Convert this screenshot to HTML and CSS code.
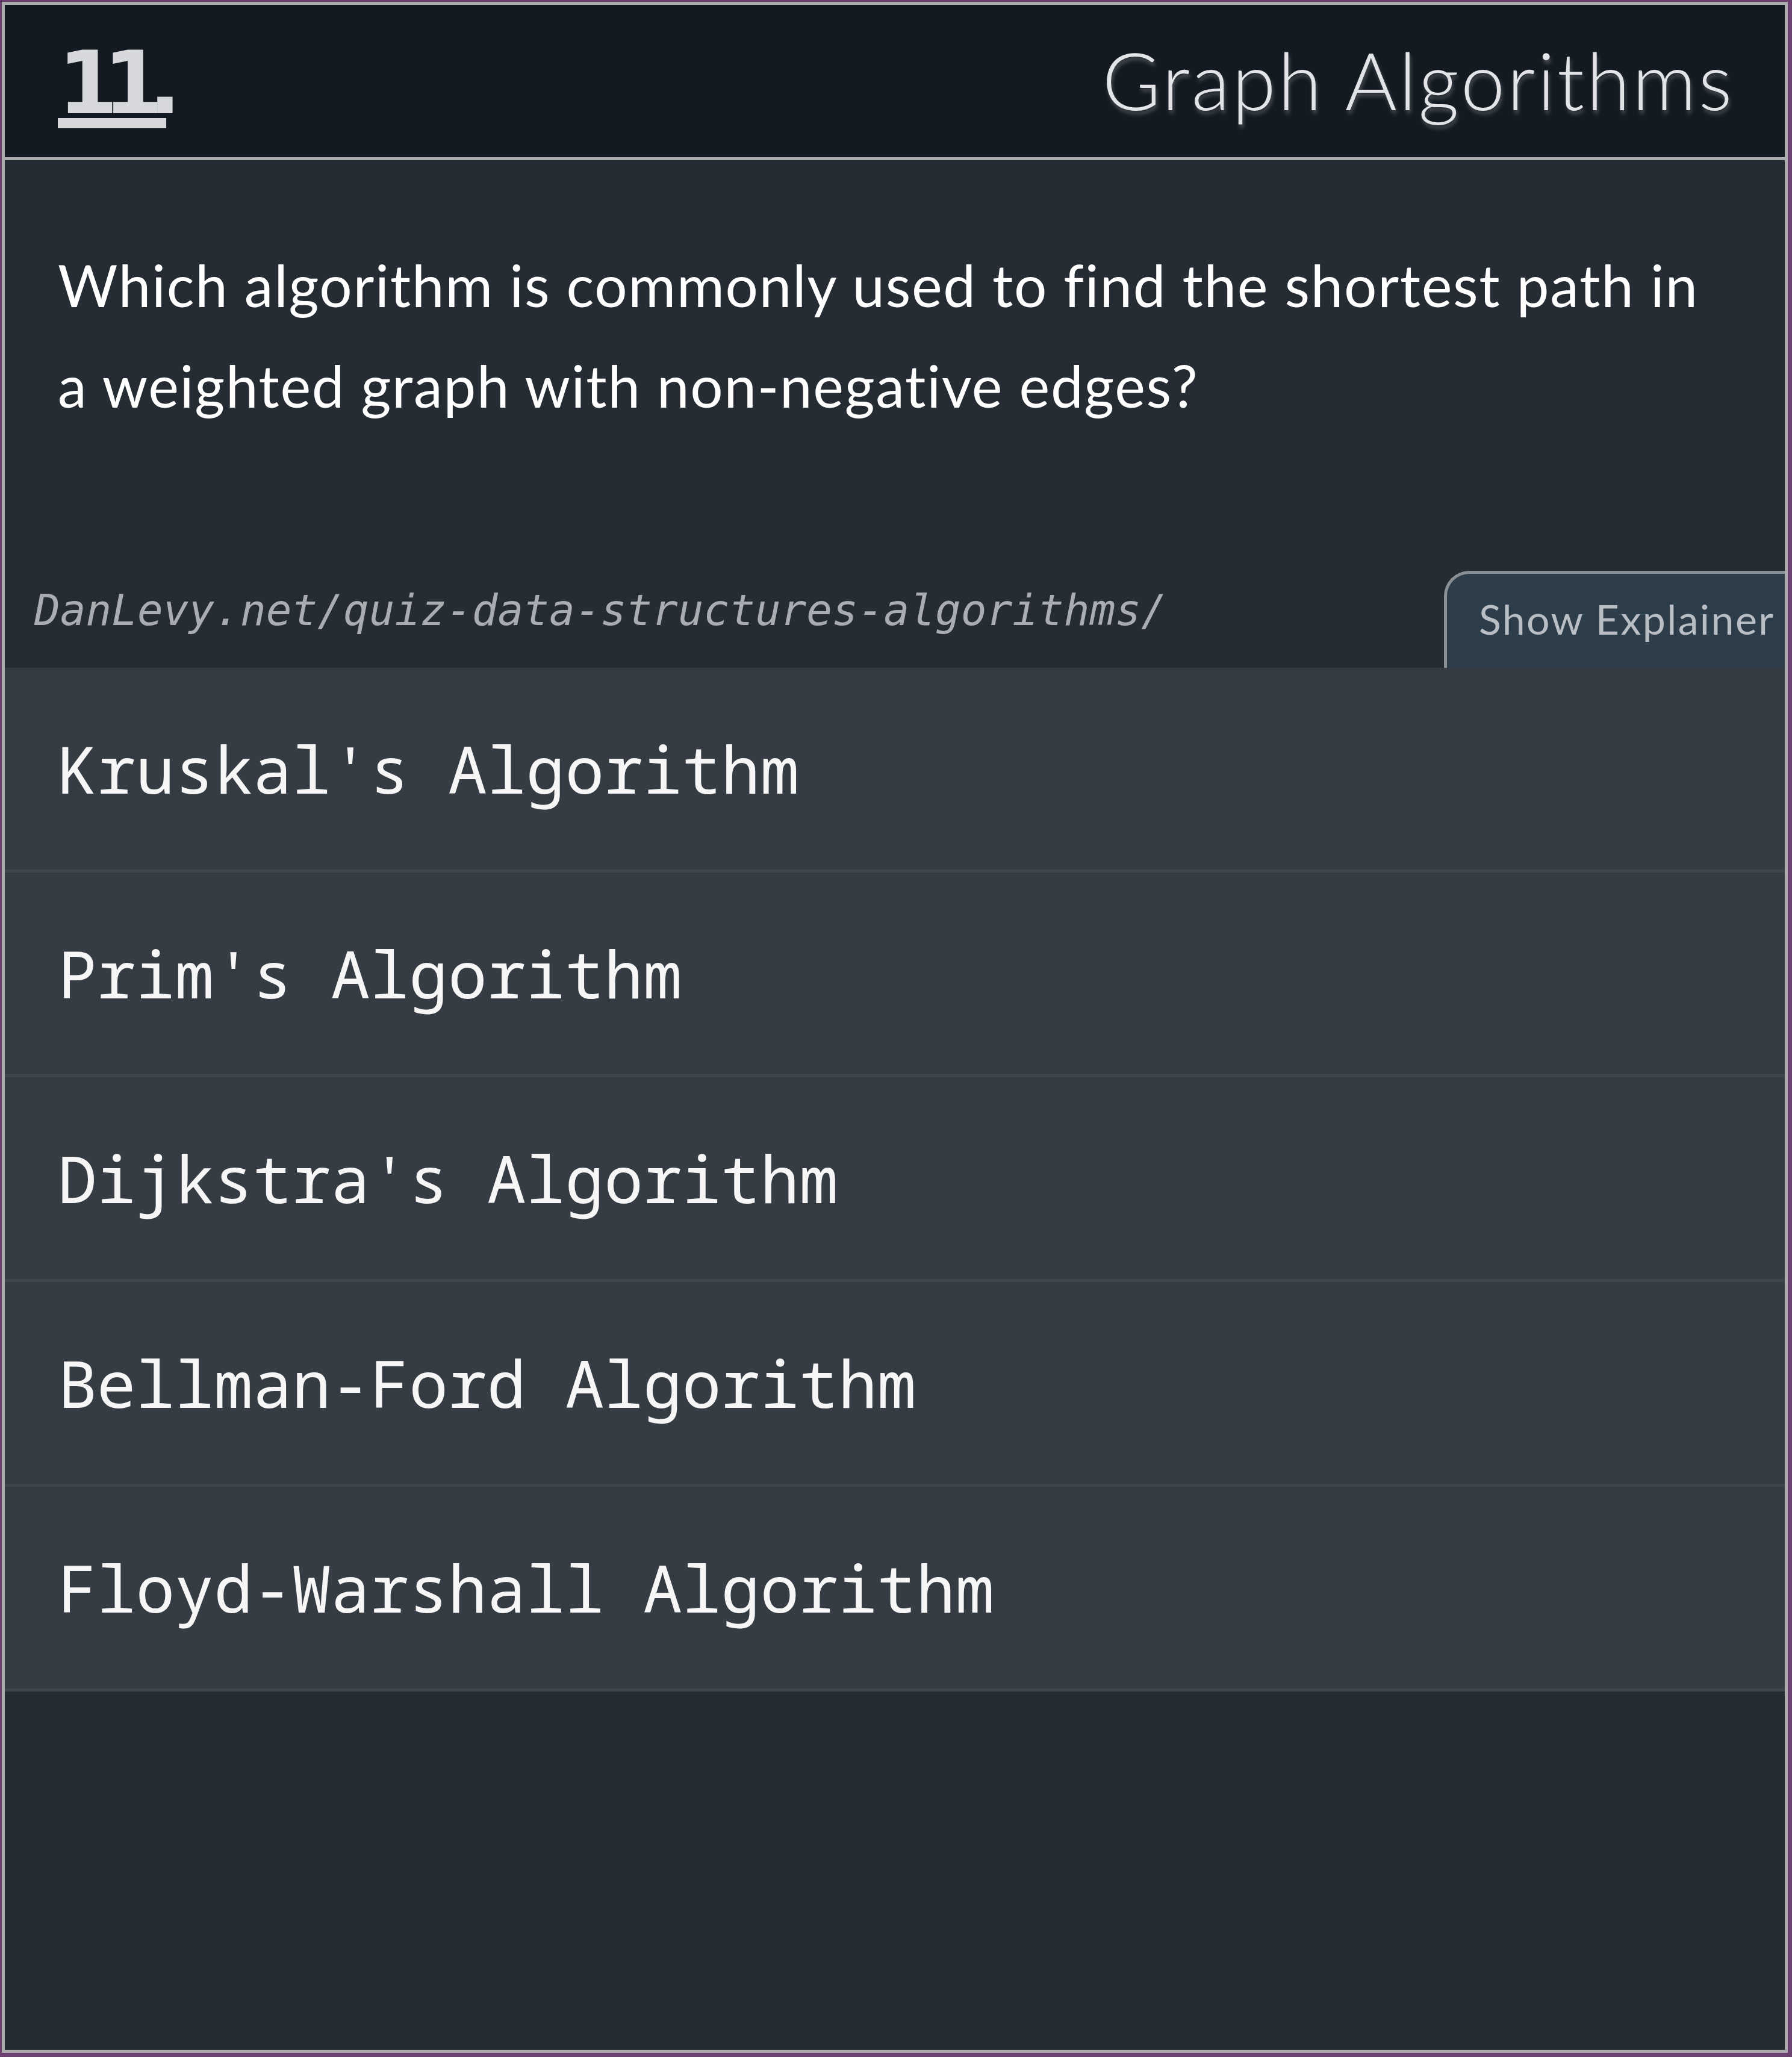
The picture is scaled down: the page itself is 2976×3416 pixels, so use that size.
FILE: index.html
```html
<!DOCTYPE html>
<html lang="en">
<head>
<meta charset="utf-8">
<title>Quiz 11 - Graph Algorithms</title>
<link rel="stylesheet" href="styles.css">
</head>
<body>
<div class="card">
  <header class="card-header">
    <span class="q-num">11.</span>
    <h1 class="q-title">Graph Algorithms</h1>
  </header>
  <p class="question">Which algorithm is commonly used to find the shortest path in a weighted graph with non-negative edges?</p>
  <div class="meta-row">
    <span class="source-url">DanLevy.net/quiz-data-structures-algorithms/</span>
    <button class="explainer-btn">Show Explainer</button>
  </div>
  <ul class="options">
    <li class="option">Kruskal's Algorithm</li>
    <li class="option">Prim's Algorithm</li>
    <li class="option">Dijkstra's Algorithm</li>
    <li class="option">Bellman-Ford Algorithm</li>
    <li class="option">Floyd-Warshall Algorithm</li>
  </ul>
</div>
</body>
</html>
```

FILE: styles.css
```css
html, body {
  margin: 0;
  padding: 0;
}
body {
  background: #6b3f6e;
  padding: 3px 7px 7px 3px;
}
.card {
  box-sizing: border-box;
  height: 3406px;
  border: 5px solid #a9abad;
  background: #262c33;
  display: flex;
  flex-direction: column;
  overflow: hidden;
}
.card-header {
  box-sizing: border-box;
  height: 258px;
  flex: none;
  background: #131a21;
  border-bottom: 5px solid #a9abad;
  display: flex;
  align-items: center;
  justify-content: space-between;
  padding: 0 84px 0 88px;
}
.q-num {
  font-family: "DejaVu Sans", sans-serif;
  font-weight: bold;
  font-size: 144px;
  letter-spacing: -25px;
  color: #d6d8db;
  text-decoration: underline;
  text-decoration-thickness: 17px;
  text-underline-offset: 8px;
  line-height: 1;
  margin-top: 6px;
  padding-right: 4px;
}
.q-title {
  margin: 0;
  font-family: "Lato", "Open Sans", sans-serif;
  font-weight: 300;
  font-size: 132px;
  letter-spacing: 3.5px;
  color: #e2e4e7;
  line-height: 1;
  text-shadow: 2px 6px 6px rgba(120, 124, 130, 0.55);
  margin-top: -6px;
}
.question {
  margin: 0;
  padding: 123px 120px 0 88px;
  height: 682px;
  box-sizing: border-box;
  flex: none;
  font-family: "Lato", "Open Sans", sans-serif;
  font-size: 96px;
  letter-spacing: 1.7px;
  line-height: 167px;
  color: #ffffff;
}
.meta-row {
  display: flex;
  justify-content: space-between;
  align-items: flex-start;
  height: 161px;
  flex: none;
}
.source-url {
  font-family: "DejaVu Sans Mono", monospace;
  font-style: italic;
  font-size: 71px;
  line-height: 71px;
  color: #a9adb2;
  padding-left: 49px;
  margin-top: 30px;
}
.explainer-btn {
  box-sizing: border-box;
  height: 161px;
  width: 566px;
  border: 5px solid #8a8f94;
  border-right: none;
  border-bottom: none;
  border-top-left-radius: 42px;
  background: #2e3d4a;
  color: #b9bec4;
  font-family: "Lato", "Open Sans", sans-serif;
  font-size: 68px;
  letter-spacing: 2.4px;
  line-height: 68px;
  text-align: left;
  padding: 20px 0 26px 53px;
  align-self: flex-end;
}
.options {
  list-style: none;
  margin: 0;
  padding: 0;
  flex: none;
}
.option {
  box-sizing: border-box;
  height: 340px;
  background: #353c44;
  border-bottom: 5px solid #3e454c;
  display: flex;
  align-items: center;
  padding-left: 88px;
  font-family: "Noto Sans Mono", "DejaVu Sans Mono", monospace;
  font-size: 108px;
  color: #f6f6f6;
}
```
